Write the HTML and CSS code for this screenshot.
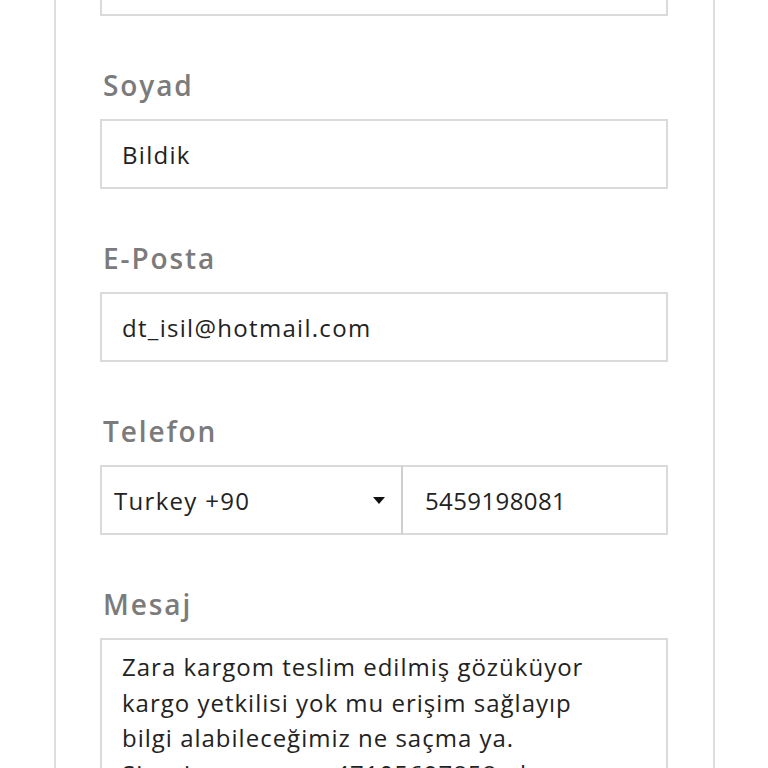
FILE: index.html
```html
<!DOCTYPE html>
<html lang="tr">
<head>
<meta charset="utf-8">
<title>İletişim Formu</title>
<link rel="stylesheet" href="styles.css">
</head>
<body>
<div class="card">
  <form class="form">
    <div class="field field-first">
      <input class="control" type="text" value="Dilek">
    </div>
    <div class="field">
      <label class="label">Soyad</label>
      <input class="control" type="text" value="Bildik">
    </div>
    <div class="field">
      <label class="label">E-Posta</label>
      <input class="control" type="text" value="dt_isil@hotmail.com">
    </div>
    <div class="field">
      <label class="label">Telefon</label>
      <div class="phone-row">
        <div class="select-wrap">
          <select class="control select">
            <option>Turkey +90</option>
          </select>
          <svg class="caret" width="12" height="7" viewBox="0 0 12 7"><path d="M0 0H12L6 7Z" fill="#111"/></svg>
        </div>
        <input class="control phone" type="text" value="5459198081">
      </div>
    </div>
    <div class="field">
      <label class="label">Mesaj</label>
      <textarea class="control textarea">Zara kargom teslim edilmiş gözüküyor
kargo yetkilisi yok mu erişim sağlayıp
bilgi alabileceğimiz ne saçma ya.
Siparis numaram 47105697858 olmasına</textarea>
    </div>
  </form>
</div>
</body>
</html>
```
FILE: styles.css
```css
html, body {
  margin: 0;
  padding: 0;
  background: #ffffff;
  overflow: hidden;
  height: 768px;
}
body {
  font-family: "Open Sans", "DejaVu Sans", sans-serif;
}
.card {
  margin-left: 54px;
  width: 661px;
  height: 900px;
  border-left: 2px solid #dedede;
  border-right: 2px solid #dedede;
  padding-left: 44px;
  box-sizing: border-box;
}
.form {
  display: flex;
  flex-direction: column;
  width: 568px;
}
.field {
  display: flex;
  flex-direction: column;
}
.field-first {
  margin-top: -54px;
}
.label {
  display: block;
  margin-top: 52px;
  margin-bottom: 17px;
  padding-left: 3px;
  font-size: 28px;
  line-height: 34px;
  font-weight: 600;
  color: #7b7b7b;
  letter-spacing: 1.9px;
}
.control {
  box-sizing: border-box;
  height: 70px;
  width: 568px;
  border: 2px solid #dadada;
  border-radius: 0;
  background: #fff;
  font-family: "Open Sans", "DejaVu Sans", sans-serif;
  font-size: 24px;
  color: #222;
  padding: 0 20px;
  margin: 0;
  outline: none;
  letter-spacing: 1.3px;
}
.phone-row {
  display: flex;
}
.select-wrap {
  position: relative;
  width: 301px;
}
.select {
  width: 301px;
  appearance: none;
  -webkit-appearance: none;
  padding-left: 12px;
  border-right: none;
}
.caret {
  position: absolute;
  left: 273px;
  top: 32px;
}
.phone {
  width: 267px;
  border-left: 2px solid #cfcfcf;
  padding-left: 22px;
  letter-spacing: 0.4px;
}
.textarea {
  height: 200px;
  padding: 9px 20px;
  line-height: 35.5px;
  resize: none;
  overflow: hidden;
  white-space: pre;
  letter-spacing: 1px;
}
```
